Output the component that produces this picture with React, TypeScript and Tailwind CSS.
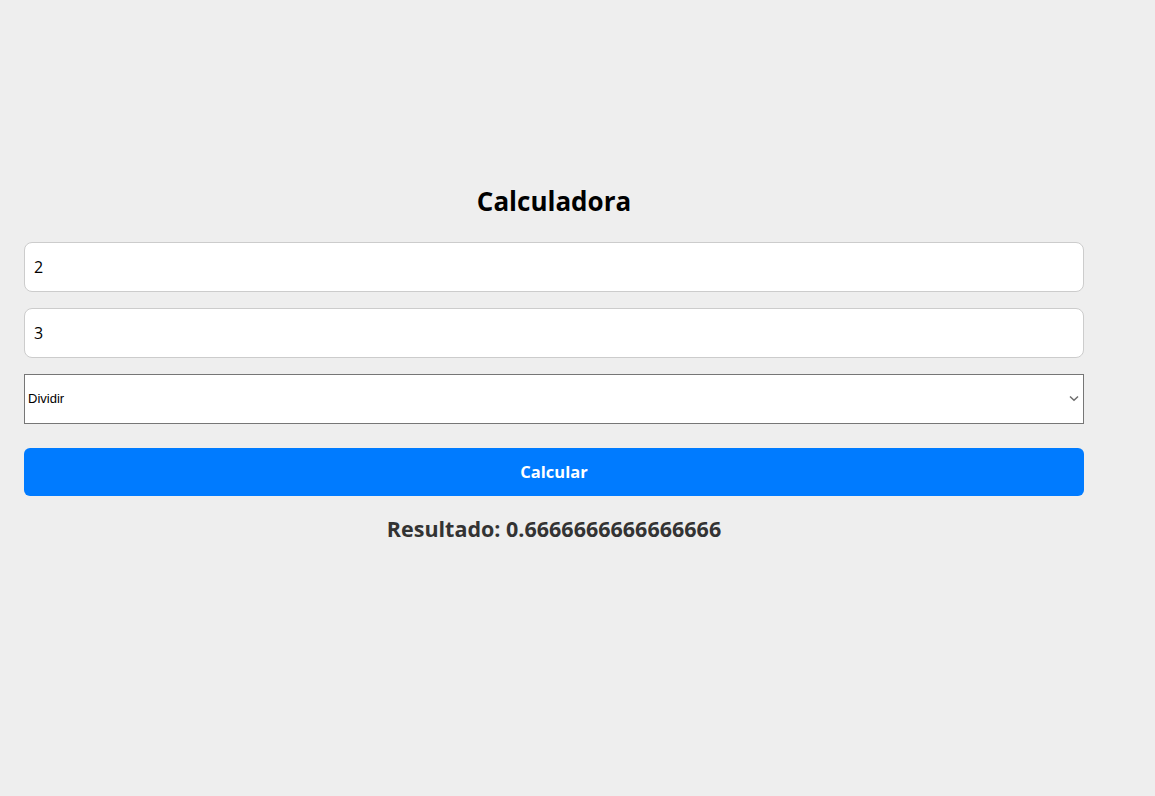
const App = () => {
  return (
    <div className="min-h-[796px] bg-[#eeeeee] font-['Open_Sans','Noto_Sans',sans-serif]">
      <div className="ml-6 w-[1060px] pt-[186px] flex flex-col">
        <h2 className="text-center text-[26px] leading-[31px] font-bold text-black mb-[25px]">Calculadora</h2>

        <input
          type="text"
          defaultValue="2"
          className="h-[50px] w-full rounded-lg border border-[#cccccc] bg-white px-[9px] text-[16px] text-black outline-none"
        />

        <input
          type="text"
          defaultValue="3"
          className="mt-4 h-[50px] w-full rounded-lg border border-[#cccccc] bg-white px-[9px] text-[16px] text-black outline-none"
        />

        <div className="relative mt-4">
          <select
            defaultValue="dividir"
            className="h-[50px] w-full appearance-none border border-[#767676] bg-white pl-[3px] pr-6 font-['Liberation_Sans',Arial,sans-serif] text-[13px] text-black outline-none"
          >
            <option value="sumar">Sumar</option>
            <option value="restar">Restar</option>
            <option value="multiplicar">Multiplicar</option>
            <option value="dividir">Dividir</option>
          </select>
          <svg
            className="pointer-events-none absolute right-[5px] top-[21px]"
            width="10"
            height="7"
            viewBox="0 0 10 7"
            fill="none"
          >
            <path d="M1 1.5 L5 5.2 L9 1.5" stroke="#6d6d6d" strokeWidth="1.5" />
          </svg>
        </div>

        <button className="mt-6 h-12 w-full rounded-md bg-[#007bff] text-[16.5px] font-bold text-white">
          Calcular
        </button>

        <div className="mt-[17px] text-center text-[21.5px] font-bold text-[#333333]">
          Resultado: 0.6666666666666666
        </div>
      </div>
    </div>
  );
};

export default App;
